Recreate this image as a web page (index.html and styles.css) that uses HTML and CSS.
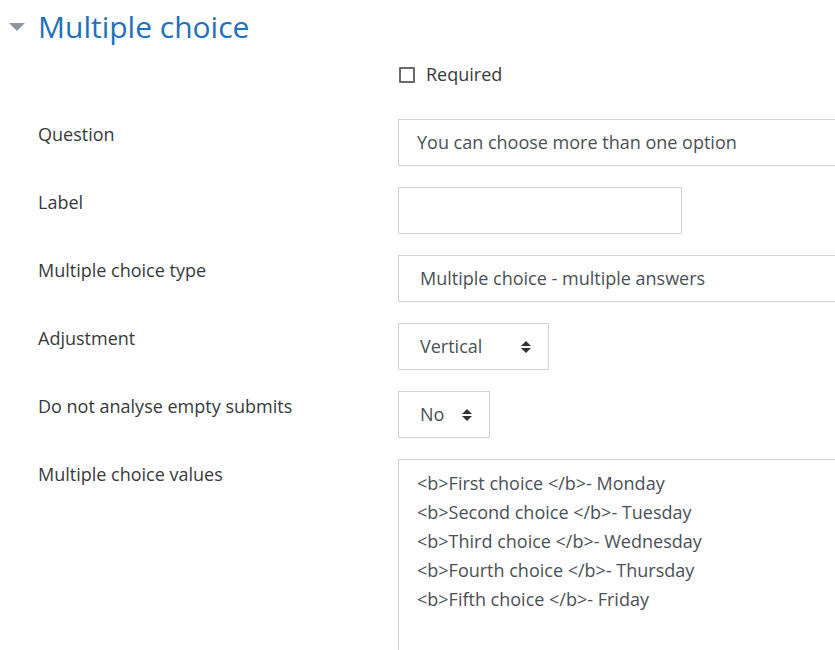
FILE: index.html
```html
<!DOCTYPE html>
<html lang="en">
<head>
    <meta charset="UTF-8">
    <title>Multiple choice</title>
    <link rel="stylesheet" href="styles.css">
</head>
<body>
<fieldset class="section">
    <legend class="section-head">
        <span class="caret"></span>
        <span class="section-title">Multiple choice</span>
    </legend>

    <div class="row row-check">
        <div class="label"></div>
        <label class="check"><span class="box"></span>Required</label>
    </div>

    <div class="row">
        <div class="label">Question</div>
        <div class="control input wide">You can choose more than one option</div>
    </div>

    <div class="row">
        <div class="label">Label</div>
        <div class="control input short"></div>
    </div>

    <div class="row">
        <div class="label">Multiple choice type</div>
        <div class="control select wide">Multiple choice - multiple answers</div>
    </div>

    <div class="row">
        <div class="label">Adjustment</div>
        <div class="control select select-vertical">Vertical<span class="arrows"></span></div>
    </div>

    <div class="row">
        <div class="label">Do not analyse empty submits</div>
        <div class="control select select-no">No<span class="arrows"></span></div>
    </div>

    <div class="row">
        <div class="label">Multiple choice values</div>
        <div class="control textarea">
            <div>&lt;b&gt;First choice &lt;/b&gt;- Monday</div>
            <div>&lt;b&gt;Second choice &lt;/b&gt;- Tuesday</div>
            <div>&lt;b&gt;Third choice &lt;/b&gt;- Wednesday</div>
            <div>&lt;b&gt;Fourth choice &lt;/b&gt;- Thursday</div>
            <div>&lt;b&gt;Fifth choice &lt;/b&gt;- Friday</div>
        </div>
    </div>
</fieldset>
</body>
</html>
```
FILE: styles.css
```css
body, div, fieldset, legend, label {
    margin: 0;
    padding: 0;
}

body {
    font: 18px/1.5 "Open Sans", "Liberation Sans", sans-serif;
    color: #373a3c;
    background: #fff;
    overflow: hidden;
}

.section {
    border: 0;
    width: 835px;
    height: 650px;
    overflow: hidden;
}

.section-head {
    display: flex;
    align-items: center;
    height: 56px;
    padding-left: 9px;
}

.caret {
    width: 0;
    height: 0;
    border-left: 8px solid transparent;
    border-right: 8px solid transparent;
    border-top: 8px solid #8f959e;
    margin-right: 13px;
    margin-top: -2px;
}

.section-title {
    font-size: 30px;
    color: #1f70c1;
    line-height: 1;
    margin-top: -3px;
}

.row {
    display: flex;
    align-items: flex-start;
    margin-bottom: 21px;
}

.label {
    width: 398px;
    padding-left: 38px;
    box-sizing: border-box;
    padding-top: 2px;
    flex-shrink: 0;
}

.row-check {
    margin-top: 5px;
    margin-bottom: 31px;
}

.check {
    display: flex;
    align-items: center;
    color: #373a3c;
    margin-left: 1px;
}

.box {
    width: 12px;
    height: 12px;
    border: 2px solid #6a6a6a;
    border-radius: 1px;
    margin-right: 11px;
}

.control {
    box-sizing: border-box;
    border: 1px solid #ced4da;
    height: 47px;
    padding: 0 0 0 18px;
    color: #495057;
    flex-shrink: 0;
    display: flex;
    align-items: center;
}

.wide {
    width: 440px;
}

.short {
    width: 284px;
}

.select {
    padding-left: 21px;
}

.select-vertical {
    width: 151px;
}

.select-no {
    width: 92px;
}

.arrows {
    margin-left: auto;
    margin-right: 17px;
    display: flex;
    flex-direction: column;
    gap: 2px;
}

.arrows::before, .arrows::after {
    content: "";
    width: 0;
    height: 0;
    border-left: 5px solid transparent;
    border-right: 5px solid transparent;
}

.arrows::before {
    border-bottom: 5px solid #333;
}

.arrows::after {
    border-top: 5px solid #333;
}

.textarea {
    display: block;
    width: 440px;
    height: 230px;
    padding: 9px 18px;
    line-height: 29px;
}
```
